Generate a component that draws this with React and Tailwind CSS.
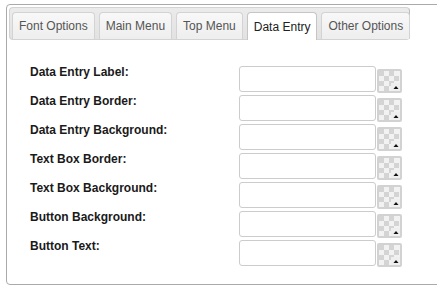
import React from 'react';

const tabs = ['Font Options', 'Main Menu', 'Top Menu', 'Data Entry', 'Other Options'];
const fields = [
  'Data Entry Label:',
  'Data Entry Border:',
  'Data Entry Background:',
  'Text Box Border:',
  'Text Box Background:',
  'Button Background:',
  'Button Text:',
];

// transparent-colour trigger: checkerboard with a little arrow
function Swatch() {
  const cells = [];
  for (let r = 0; r < 4; r++) {
    for (let c = 0; c < 4; c++) {
      cells.push(
        <rect
          key={r + '-' + c}
          x={2 + c * 5}
          y={2 + r * 5}
          width="5"
          height="5"
          fill={(r + c) % 2 === 0 ? '#d4d4d4' : '#f2f2f2'}
        />
      );
    }
  }
  return (
    <svg width="25" height="24" viewBox="0 0 25 24" className="mt-[3px] ml-[1px] shrink-0">
      <rect x="0" y="0" width="25" height="24" rx="2" fill="#d2d2d2" />
      <rect x="2" y="2" width="21" height="20" fill="#f2f2f2" />
      {cells}
      <rect x="14" y="14" width="9" height="8" fill="#efefef" />
      <polygon points="16.5,20 21.5,20 19,17" fill="#111" />
    </svg>
  );
}

function App() {
  return (
    <div className="w-[437px] h-[291px] overflow-hidden bg-white font-['Liberation_Sans',Arial,sans-serif]">
      <div className="ml-[6px] mt-[4px] w-[460px] h-[281px] border border-[#aaaaaa] rounded-[4px] p-[2px]">
        {/* tab strip */}
        <div className="w-[401px] h-[33px] bg-[linear-gradient(#ebebeb,#e2e2e2)] border border-[#d3d3d3] border-r-[#bdbdbd] rounded-[4px] pt-[4px] pl-[2px] flex gap-[4px]">
          {tabs.map((t) => {
            const active = t === 'Data Entry';
            return (
              <div
                key={t}
                className={
                  active
                    ? 'shrink-0 whitespace-nowrap h-[28px] px-[6px] flex items-center text-[12px] text-[#212121] bg-white border border-b-0 border-[#c5c5c5] rounded-t-[4px]'
                    : 'shrink-0 whitespace-nowrap h-[27px] px-[6px] flex items-center text-[12px] text-[#555555] bg-[linear-gradient(#f8f8f8,#eeeeee)] border border-b-0 border-[#d3d3d3] rounded-t-[4px]'
                }
              >
                {t}
              </div>
            );
          })}
        </div>

        {/* form */}
        <div className="mt-[26px] pl-[21px] flex flex-col gap-[3px]">
          {fields.map((f) => (
            <div key={f} className="flex items-start h-[26px]">
              <div className="w-[209px] text-[12px] leading-[12px] font-bold text-[#1a1a1a]">{f}</div>
              <input
                type="text"
                className="w-[137px] h-[26px] border border-[#cccccc] rounded-[3px] bg-white outline-none"
              />
              <Swatch />
            </div>
          ))}
        </div>
      </div>
    </div>
  );
}

export default App;
